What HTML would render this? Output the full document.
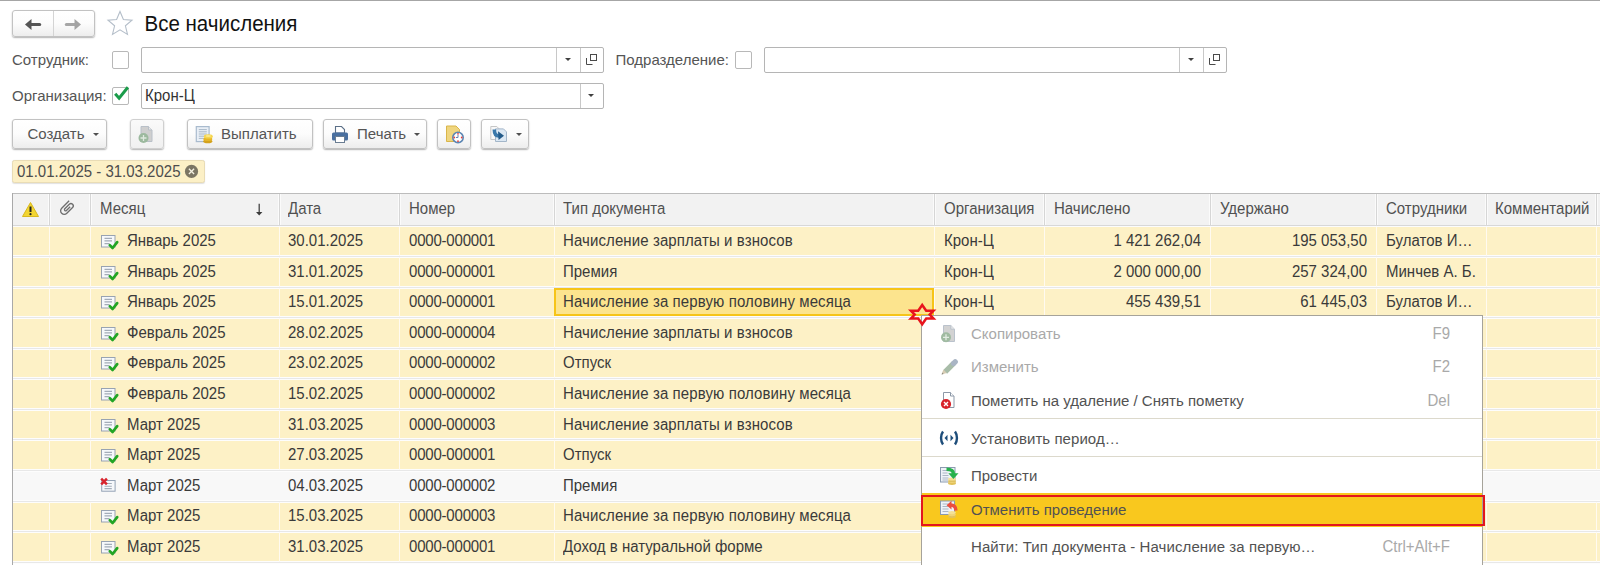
<!DOCTYPE html>
<html><head><meta charset="utf-8"><style>
*{box-sizing:border-box;margin:0;padding:0}
html,body{width:1600px;height:565px;overflow:hidden;background:#fff}
body{position:relative;font-family:"Liberation Sans",sans-serif;font-size:15px;color:#333}
.a{position:absolute}
.btn{position:absolute;border:1px solid #c2c2c2;border-radius:3px;background:linear-gradient(#fff 0%,#fcfcfc 50%,#ededed 100%);box-shadow:0 1px 1.5px rgba(0,0,0,0.3)}
.lbl{position:absolute;color:#555;height:20px;line-height:20px;white-space:nowrap}
.cb{position:absolute;width:17px;height:17.5px;border:1px solid #b8b8b8;border-radius:2px;background:#fff}
.inp{position:absolute;height:26px;border:1px solid #b5b5b5;border-radius:2px;background:#fff}
.dd{position:absolute;top:0;bottom:0;width:1px;background:#c8c8c8}
.tri{position:absolute;width:0;height:0;border-left:3.5px solid transparent;border-right:3.5px solid transparent;border-top:3.5px solid #404040}
.tri2{position:absolute;width:0;height:0;border-left:3px solid transparent;border-right:3px solid transparent;border-top:3px solid #505050}
.bt{position:absolute;color:#555;height:20px;line-height:20px;white-space:nowrap;transform:scaleY(1.03);transform-origin:0 15.2px}
.ht{position:absolute;top:192.5px;height:31px;line-height:31px;color:#505050;white-space:nowrap;transform:scaleY(1.05);transform-origin:0 20.7px}
.tx{position:absolute;height:20px;line-height:20px;white-space:nowrap;color:#3a3a3a;transform:scaleY(1.04);transform-origin:0 15.2px}
.mi{position:absolute;left:971px;height:20px;line-height:20px;white-space:nowrap;color:#525252;transform:scaleY(1.03);transform-origin:0 15.2px}
.mi.dis{color:#a9a9a9}
.sc{position:absolute;right:150px;height:20px;line-height:20px;color:#a9a9a9;white-space:nowrap;transform:scaleY(1.05);transform-origin:0 15.2px}
</style></head><body>
<div class="a" style="left:0;top:0;width:1600px;height:1px;background:#a6a6a6"></div>

<!-- nav -->
<div class="btn" style="left:12px;top:10px;width:83px;height:27px"></div>
<div class="a" style="left:53px;top:11px;width:1px;height:25px;background:#d4d4d4"></div>
<svg class="a" style="left:24px;top:17.5px" width="18" height="13" viewBox="0 0 18 13"><path d="M6 6.5h9.7" stroke="#555" stroke-width="3" stroke-linecap="round"/><path d="M1 6.5l6.5-5.5v11z" fill="#555"/></svg>
<svg class="a" style="left:64px;top:17.5px" width="18" height="13" viewBox="0 0 18 13"><path d="M2.3 6.5h10" stroke="#a6a6a6" stroke-width="3" stroke-linecap="round"/><path d="M17 6.5l-6.5-5.5v11z" fill="#a3a3a3"/></svg>
<svg class="a" style="left:106px;top:10px" width="28" height="26" viewBox="0 0 28 26"><path d="M14 1.5l3.4 8 8.6.7-6.6 5.6 2.1 8.6L14 19.8l-7.5 4.6 2.1-8.6L2 10.2l8.6-.7z" fill="none" stroke="#b4bec9" stroke-width="1.1"/></svg>
<div class="a" style="left:144.5px;top:9.5px;height:28px;line-height:28px;font-size:20.5px;color:#111;white-space:nowrap;transform:scaleY(1.07);transform-origin:0 21.1px">Все начисления</div>

<!-- form row 1 -->
<div class="lbl" style="left:12px;top:50px">Сотрудник:</div>
<div class="cb" style="left:112px;top:51px"></div>
<div class="inp" style="left:141px;top:47px;width:463px">
  <div class="dd" style="left:414px"></div><div class="tri" style="left:423px;top:9.5px"></div>
  <div class="dd" style="left:438px"></div>
  <svg class="a" style="left:443px;top:6px" width="14" height="12" viewBox="0 0 14 12"><rect x="5.5" y="0.5" width="6" height="6" fill="none" stroke="#4a4a4a"/><path d="M1.5 4v6.5h6" fill="none" stroke="#4a4a4a"/></svg>
</div>
<div class="lbl" style="left:615.5px;top:50px">Подразделение:</div>
<div class="cb" style="left:735px;top:51px"></div>
<div class="inp" style="left:764px;top:47px;width:463px">
  <div class="dd" style="left:414px"></div><div class="tri" style="left:423px;top:9.5px"></div>
  <div class="dd" style="left:438px"></div>
  <svg class="a" style="left:443px;top:6px" width="14" height="12" viewBox="0 0 14 12"><rect x="5.5" y="0.5" width="6" height="6" fill="none" stroke="#4a4a4a"/><path d="M1.5 4v6.5h6" fill="none" stroke="#4a4a4a"/></svg>
</div>

<!-- form row 2 -->
<div class="lbl" style="left:12px;top:86px">Организация:</div>
<div class="cb" style="left:112px;top:87px"></div>
<svg class="a" style="left:113px;top:85px" width="18" height="18" viewBox="0 0 18 18"><path d="M2.2 8.8l3.9 4.4L14.9 2.3" fill="none" stroke="#1a9c4a" stroke-width="3"/></svg>
<div class="inp" style="left:141px;top:83px;width:463px">
  <div class="a" style="left:3px;top:2px;height:20px;line-height:20px;color:#333;transform:scaleY(1.05);transform-origin:0 15.2px">Крон-Ц</div>
  <div class="dd" style="left:438px"></div><div class="tri" style="left:446px;top:9.5px"></div>
</div>

<!-- toolbar -->
<div class="btn" style="left:12px;top:119px;width:95px;height:30px"></div>
<div class="bt" style="left:27.5px;top:124px">Создать</div><div class="tri2" style="left:93px;top:133px"></div>
<div class="btn" style="left:130px;top:119px;width:34px;height:30px;background:linear-gradient(#fafafa,#f0f0f0);border-color:#d0d0d0"></div>
<svg class="a" style="left:137px;top:124px" width="20" height="20" viewBox="0 0 20 20"><path d="M4 2.5h7.5l3.5 3.5v11.5H4z" fill="#cfcfcf" stroke="#b9c0c8"/><path d="M11.5 2.5v3.5h3.5" fill="#e8e8e8" stroke="#b9c0c8"/><circle cx="6.5" cy="14" r="5" fill="#9cb99e"/><path d="M3.5 14h6M6.5 11v6" stroke="#dfe9df" stroke-width="1.3"/></svg>
<div class="btn" style="left:187px;top:119px;width:126px;height:30px"></div>
<svg class="a" style="left:194px;top:124px" width="22" height="22" viewBox="0 0 22 22"><rect x="2.3" y="2.6" width="12.8" height="15" fill="#e9eff6" stroke="#a9bbce" stroke-width="1.2"/><path d="M4.8 5.6h8M4.8 7.8h8M4.8 10h8M4.8 12.2h6M4.8 14.4h5" stroke="#98aabd" stroke-width="0.8"/><ellipse cx="13.8" cy="17.3" rx="4.5" ry="2" fill="#d4a21c"/><ellipse cx="13.8" cy="15" rx="4.5" ry="2" fill="#e6b627"/><ellipse cx="14.3" cy="12.4" rx="4.5" ry="2.1" fill="#f5d54e"/><ellipse cx="14.3" cy="12" rx="2.6" ry="1" fill="#fbe88a"/></svg>
<div class="bt" style="left:221px;top:124px">Выплатить</div>
<div class="btn" style="left:323px;top:119px;width:104px;height:30px"></div>
<svg class="a" style="left:330px;top:124px" width="20" height="20" viewBox="0 0 20 20"><path d="M5.5 2.5h6l3 3v3.5h-9z" fill="#fff" stroke="#5b6f87" stroke-width="1.1"/><rect x="2" y="8.5" width="16" height="8" rx="1.5" fill="#4a70a0"/><rect x="5.5" y="12.5" width="9" height="6" fill="#fff" stroke="#6a7d92"/></svg>
<div class="bt" style="left:357px;top:124px">Печать</div><div class="tri2" style="left:414px;top:133px"></div>
<div class="btn" style="left:437px;top:119px;width:34px;height:30px"></div>
<svg class="a" style="left:444px;top:124px" width="22" height="20" viewBox="0 0 22 20"><path d="M2.5 2h9.5l3.5 3.5V17.5h-13z" fill="#efd57e" stroke="#d9b54a" stroke-width="1"/><circle cx="14" cy="13.5" r="5.2" fill="#fff" stroke="#5c86b3" stroke-width="1.6"/><circle cx="14" cy="9.8" r="0.9" fill="#e04040"/><circle cx="14" cy="17.2" r="0.9" fill="#e04040"/><circle cx="10.3" cy="13.5" r="0.9" fill="#e04040"/><circle cx="17.7" cy="13.5" r="0.9" fill="#e04040"/><path d="M14 11v2.5h-2" stroke="#5c86b3" stroke-width="1" fill="none"/></svg>
<div class="btn" style="left:481px;top:119px;width:48px;height:30px"></div>
<svg class="a" style="left:488px;top:124px" width="22" height="20" viewBox="0 0 22 20"><path d="M2.8 2.5h6l2 2v11h-8z" fill="#f8f8f8" stroke="#c6c6c6"/><path d="M7.5 4.9h8l3 3v9.6h-11z" fill="#dce8f3" stroke="#a3b6c9"/><path d="M6.3 5.5C6.3 9.8 7.8 12 11 12" stroke="#3a78aa" stroke-width="3.6" fill="none"/><path d="M10 7.3l6 4.4-5.4 4.3z" fill="#245b8a"/></svg>
<div class="tri2" style="left:516px;top:133px"></div>

<!-- period tag -->
<div class="a" style="left:12px;top:160px;width:193px;height:23px;background:#fcf0c6;border:1px solid #e9dcb5;border-radius:2.5px;box-shadow:0 0.5px 1px rgba(0,0,0,0.12)"></div>
<div class="a" style="left:17px;top:162px;height:20px;line-height:20px;color:#4d4d4d;white-space:nowrap;transform:scaleY(1.05);transform-origin:0 15.2px">01.01.2025 - 31.03.2025</div>
<svg class="a" style="left:184px;top:164px" width="15" height="15" viewBox="0 0 15 15"><circle cx="7.5" cy="7.4" r="6.6" fill="#7b7563"/><path d="M4.9 4.8l5.2 5.2M10.1 4.8l-5.2 5.2" stroke="#f4f0e0" stroke-width="1.3"/></svg>

<!-- table -->
<div class="a" style="left:12px;top:193px;width:1588px;height:33px;background:#f2f2f2"></div>
<div class="a" style="left:12px;top:193px;width:1588px;height:1px;background:#bcbcbc"></div>
<div class="a" style="left:12px;top:225px;width:1588px;height:1px;background:#d8d8d8"></div>
<div class="a" style="left:48px;top:194px;width:3px;height:31px;background:#fbfbfb"></div><div class="a" style="left:49px;top:194px;width:1px;height:31px;background:#d6d6d6"></div><div class="a" style="left:89px;top:194px;width:3px;height:31px;background:#fbfbfb"></div><div class="a" style="left:90px;top:194px;width:1px;height:31px;background:#d6d6d6"></div><div class="a" style="left:278px;top:194px;width:3px;height:31px;background:#fbfbfb"></div><div class="a" style="left:279px;top:194px;width:1px;height:31px;background:#d6d6d6"></div><div class="a" style="left:398px;top:194px;width:3px;height:31px;background:#fbfbfb"></div><div class="a" style="left:399px;top:194px;width:1px;height:31px;background:#d6d6d6"></div><div class="a" style="left:553px;top:194px;width:3px;height:31px;background:#fbfbfb"></div><div class="a" style="left:554px;top:194px;width:1px;height:31px;background:#d6d6d6"></div><div class="a" style="left:933px;top:194px;width:3px;height:31px;background:#fbfbfb"></div><div class="a" style="left:934px;top:194px;width:1px;height:31px;background:#d6d6d6"></div><div class="a" style="left:1043px;top:194px;width:3px;height:31px;background:#fbfbfb"></div><div class="a" style="left:1044px;top:194px;width:1px;height:31px;background:#d6d6d6"></div><div class="a" style="left:1209px;top:194px;width:3px;height:31px;background:#fbfbfb"></div><div class="a" style="left:1210px;top:194px;width:1px;height:31px;background:#d6d6d6"></div><div class="a" style="left:1375px;top:194px;width:3px;height:31px;background:#fbfbfb"></div><div class="a" style="left:1376px;top:194px;width:1px;height:31px;background:#d6d6d6"></div><div class="a" style="left:1485px;top:194px;width:3px;height:31px;background:#fbfbfb"></div><div class="a" style="left:1486px;top:194px;width:1px;height:31px;background:#d6d6d6"></div><div class="a" style="left:1595px;top:194px;width:3px;height:31px;background:#fbfbfb"></div><div class="a" style="left:1596px;top:194px;width:1px;height:31px;background:#d6d6d6"></div><div class="ht" style="left:100px">Месяц</div><div class="ht" style="left:288px">Дата</div><div class="ht" style="left:409px">Номер</div><div class="ht" style="left:563px">Тип документа</div><div class="ht" style="left:944px">Организация</div><div class="ht" style="left:1054px">Начислено</div><div class="ht" style="left:1220px">Удержано</div><div class="ht" style="left:1386px">Сотрудники</div><div class="ht" style="left:1495px">Комментарий</div>
<svg class="a" style="left:21px;top:201px" width="19" height="17" viewBox="0 0 19 17"><path d="M9.5 1.5L17.5 15.5H1.5z" fill="#f2d531" stroke="#d8b81f" stroke-width="1" stroke-linejoin="round"/><path d="M9.5 5.5v5.5" stroke="#222" stroke-width="2"/><circle cx="9.5" cy="13.2" r="1.1" fill="#222"/></svg>
<svg class="a" style="left:58px;top:199px" width="18" height="18" viewBox="0 0 18 18"><g transform="translate(8.9 9.1) rotate(45) scale(1.1)"><path d="M-3.3 -6.2V3.4A3.3 3.3 0 0 0 3.3 3.4V-4A2.1 2.1 0 0 0 -0.9 -4V1.8A1.05 1.05 0 0 0 1.2 1.8V-3" fill="none" stroke="#6e6e6e" stroke-width="1.2"/></g></svg>
<svg class="a" style="left:254px;top:203px" width="10" height="14" viewBox="0 0 10 14"><path d="M5.2 0.8v9" stroke="#444" stroke-width="1.3"/><path d="M2 9.1h6.4L5.2 12.4z" fill="#3a3a3a"/></svg>
<div class="a" style="left:12px;top:226px;width:1588px;height:339px;overflow:hidden">
<div class="a" style="left:-12px;top:-226px;width:1600px;height:565px">
<div class="a" style="left:0;top:226px;width:1600px;height:31px;background:#fdf1c6"></div><div class="a" style="left:0;top:257px;width:1600px;height:31px;background:#fdf1c6"></div><div class="a" style="left:0;top:288px;width:1600px;height:30px;background:#fdf1c6"></div><div class="a" style="left:0;top:318px;width:1600px;height:31px;background:#fdf1c6"></div><div class="a" style="left:0;top:349px;width:1600px;height:30px;background:#fdf1c6"></div><div class="a" style="left:0;top:379px;width:1600px;height:31px;background:#fdf1c6"></div><div class="a" style="left:0;top:410px;width:1600px;height:30px;background:#fdf1c6"></div><div class="a" style="left:0;top:440px;width:1600px;height:31px;background:#fdf1c6"></div><div class="a" style="left:0;top:471px;width:1600px;height:31px;background:#f8f8f8"></div><div class="a" style="left:0;top:502px;width:1600px;height:30px;background:#fdf1c6"></div><div class="a" style="left:0;top:532px;width:1600px;height:31px;background:#fdf1c6"></div><div class="a" style="left:0;top:255px;width:1600px;height:3px;background:#fdfdfd"></div><div class="a" style="left:0;top:256px;width:1600px;height:1px;background:#e8e8e8"></div><div class="a" style="left:0;top:286px;width:1600px;height:3px;background:#fdfdfd"></div><div class="a" style="left:0;top:287px;width:1600px;height:1px;background:#e8e8e8"></div><div class="a" style="left:0;top:316px;width:1600px;height:3px;background:#fdfdfd"></div><div class="a" style="left:0;top:317px;width:1600px;height:1px;background:#e8e8e8"></div><div class="a" style="left:0;top:347px;width:1600px;height:3px;background:#fdfdfd"></div><div class="a" style="left:0;top:348px;width:1600px;height:1px;background:#e8e8e8"></div><div class="a" style="left:0;top:377px;width:1600px;height:3px;background:#fdfdfd"></div><div class="a" style="left:0;top:378px;width:1600px;height:1px;background:#e8e8e8"></div><div class="a" style="left:0;top:408px;width:1600px;height:3px;background:#fdfdfd"></div><div class="a" style="left:0;top:409px;width:1600px;height:1px;background:#e8e8e8"></div><div class="a" style="left:0;top:438px;width:1600px;height:3px;background:#fdfdfd"></div><div class="a" style="left:0;top:439px;width:1600px;height:1px;background:#e8e8e8"></div><div class="a" style="left:0;top:469px;width:1600px;height:3px;background:#fdfdfd"></div><div class="a" style="left:0;top:470px;width:1600px;height:1px;background:#e8e8e8"></div><div class="a" style="left:0;top:500px;width:1600px;height:3px;background:#fdfdfd"></div><div class="a" style="left:0;top:501px;width:1600px;height:1px;background:#e8e8e8"></div><div class="a" style="left:0;top:530px;width:1600px;height:3px;background:#fdfdfd"></div><div class="a" style="left:0;top:531px;width:1600px;height:1px;background:#e8e8e8"></div><div class="a" style="left:0;top:561px;width:1600px;height:3px;background:#fdfdfd"></div><div class="a" style="left:0;top:562px;width:1600px;height:1px;background:#e8e8e8"></div><div class="a" style="left:49px;top:226px;width:1px;height:30px;background:#fffaf0"></div><div class="a" style="left:90px;top:226px;width:1px;height:30px;background:#fffaf0"></div><div class="a" style="left:279px;top:226px;width:1px;height:30px;background:#fffaf0"></div><div class="a" style="left:399px;top:226px;width:1px;height:30px;background:#fffaf0"></div><div class="a" style="left:554px;top:226px;width:1px;height:30px;background:#fffaf0"></div><div class="a" style="left:934px;top:226px;width:1px;height:30px;background:#fffaf0"></div><div class="a" style="left:1044px;top:226px;width:1px;height:30px;background:#fffaf0"></div><div class="a" style="left:1210px;top:226px;width:1px;height:30px;background:#fffaf0"></div><div class="a" style="left:1376px;top:226px;width:1px;height:30px;background:#fffaf0"></div><div class="a" style="left:1486px;top:226px;width:1px;height:30px;background:#fffaf0"></div><div class="a" style="left:1596px;top:226px;width:1px;height:30px;background:#fffaf0"></div><svg class="a" style="left:100px;top:234px" width="20" height="16" viewBox="0 0 20 16"><rect x="1.5" y="1.5" width="13.5" height="11.5" fill="#f6f8fb" stroke="#98a3b2"/><path d="M4.5 4.3h7.5M4.5 6.9h7.5M4.5 9.6h5" stroke="#a3acb8" stroke-width="1.2"/><path d="M9.8 11.1L12.6 14L17.2 8.1" stroke="#22a524" stroke-width="2.7" fill="none" stroke-linecap="round" stroke-linejoin="round"/></svg><div class="tx" style="left:127px;top:231.0px;">Январь 2025</div><div class="tx" style="left:288px;top:231.0px;">30.01.2025</div><div class="tx" style="left:409px;top:231.0px;letter-spacing:-0.2px;">0000-000001</div><div class="tx" style="left:563px;top:231.0px;letter-spacing:0.1px;">Начисление зарплаты и взносов</div><div class="tx" style="left:944px;top:231.0px;">Крон-Ц</div><div class="tx" style="right:399px;top:231.0px;">1 421 262,04</div><div class="tx" style="right:233px;top:231.0px;">195 053,50</div><div class="tx" style="left:1386px;top:231.0px;">Булатов И…</div><div class="a" style="left:49px;top:257px;width:1px;height:30px;background:#fffaf0"></div><div class="a" style="left:90px;top:257px;width:1px;height:30px;background:#fffaf0"></div><div class="a" style="left:279px;top:257px;width:1px;height:30px;background:#fffaf0"></div><div class="a" style="left:399px;top:257px;width:1px;height:30px;background:#fffaf0"></div><div class="a" style="left:554px;top:257px;width:1px;height:30px;background:#fffaf0"></div><div class="a" style="left:934px;top:257px;width:1px;height:30px;background:#fffaf0"></div><div class="a" style="left:1044px;top:257px;width:1px;height:30px;background:#fffaf0"></div><div class="a" style="left:1210px;top:257px;width:1px;height:30px;background:#fffaf0"></div><div class="a" style="left:1376px;top:257px;width:1px;height:30px;background:#fffaf0"></div><div class="a" style="left:1486px;top:257px;width:1px;height:30px;background:#fffaf0"></div><div class="a" style="left:1596px;top:257px;width:1px;height:30px;background:#fffaf0"></div><svg class="a" style="left:100px;top:265px" width="20" height="16" viewBox="0 0 20 16"><rect x="1.5" y="1.5" width="13.5" height="11.5" fill="#f6f8fb" stroke="#98a3b2"/><path d="M4.5 4.3h7.5M4.5 6.9h7.5M4.5 9.6h5" stroke="#a3acb8" stroke-width="1.2"/><path d="M9.8 11.1L12.6 14L17.2 8.1" stroke="#22a524" stroke-width="2.7" fill="none" stroke-linecap="round" stroke-linejoin="round"/></svg><div class="tx" style="left:127px;top:261.6px;">Январь 2025</div><div class="tx" style="left:288px;top:261.6px;">31.01.2025</div><div class="tx" style="left:409px;top:261.6px;letter-spacing:-0.2px;">0000-000001</div><div class="tx" style="left:563px;top:261.6px;">Премия</div><div class="tx" style="left:944px;top:261.6px;">Крон-Ц</div><div class="tx" style="right:399px;top:261.6px;">2 000 000,00</div><div class="tx" style="right:233px;top:261.6px;">257 324,00</div><div class="tx" style="left:1386px;top:261.6px;">Минчев А. Б.</div><div class="a" style="left:49px;top:288px;width:1px;height:29px;background:#fffaf0"></div><div class="a" style="left:90px;top:288px;width:1px;height:29px;background:#fffaf0"></div><div class="a" style="left:279px;top:288px;width:1px;height:29px;background:#fffaf0"></div><div class="a" style="left:399px;top:288px;width:1px;height:29px;background:#fffaf0"></div><div class="a" style="left:554px;top:288px;width:1px;height:29px;background:#fffaf0"></div><div class="a" style="left:934px;top:288px;width:1px;height:29px;background:#fffaf0"></div><div class="a" style="left:1044px;top:288px;width:1px;height:29px;background:#fffaf0"></div><div class="a" style="left:1210px;top:288px;width:1px;height:29px;background:#fffaf0"></div><div class="a" style="left:1376px;top:288px;width:1px;height:29px;background:#fffaf0"></div><div class="a" style="left:1486px;top:288px;width:1px;height:29px;background:#fffaf0"></div><div class="a" style="left:1596px;top:288px;width:1px;height:29px;background:#fffaf0"></div><div class="a" style="left:554px;top:288px;width:380px;height:28px;background:#fce48e;border:2.6px solid #f6c419"></div><svg class="a" style="left:100px;top:295px" width="20" height="16" viewBox="0 0 20 16"><rect x="1.5" y="1.5" width="13.5" height="11.5" fill="#f6f8fb" stroke="#98a3b2"/><path d="M4.5 4.3h7.5M4.5 6.9h7.5M4.5 9.6h5" stroke="#a3acb8" stroke-width="1.2"/><path d="M9.8 11.1L12.6 14L17.2 8.1" stroke="#22a524" stroke-width="2.7" fill="none" stroke-linecap="round" stroke-linejoin="round"/></svg><div class="tx" style="left:127px;top:292.2px;">Январь 2025</div><div class="tx" style="left:288px;top:292.2px;">15.01.2025</div><div class="tx" style="left:409px;top:292.2px;letter-spacing:-0.2px;">0000-000001</div><div class="tx" style="left:563px;top:292.2px;letter-spacing:0.1px;">Начисление за первую половину месяца</div><div class="tx" style="left:944px;top:292.2px;">Крон-Ц</div><div class="tx" style="right:399px;top:292.2px;">455 439,51</div><div class="tx" style="right:233px;top:292.2px;">61 445,03</div><div class="tx" style="left:1386px;top:292.2px;">Булатов И…</div><div class="a" style="left:49px;top:318px;width:1px;height:30px;background:#fffaf0"></div><div class="a" style="left:90px;top:318px;width:1px;height:30px;background:#fffaf0"></div><div class="a" style="left:279px;top:318px;width:1px;height:30px;background:#fffaf0"></div><div class="a" style="left:399px;top:318px;width:1px;height:30px;background:#fffaf0"></div><div class="a" style="left:554px;top:318px;width:1px;height:30px;background:#fffaf0"></div><div class="a" style="left:934px;top:318px;width:1px;height:30px;background:#fffaf0"></div><div class="a" style="left:1044px;top:318px;width:1px;height:30px;background:#fffaf0"></div><div class="a" style="left:1210px;top:318px;width:1px;height:30px;background:#fffaf0"></div><div class="a" style="left:1376px;top:318px;width:1px;height:30px;background:#fffaf0"></div><div class="a" style="left:1486px;top:318px;width:1px;height:30px;background:#fffaf0"></div><div class="a" style="left:1596px;top:318px;width:1px;height:30px;background:#fffaf0"></div><svg class="a" style="left:100px;top:326px" width="20" height="16" viewBox="0 0 20 16"><rect x="1.5" y="1.5" width="13.5" height="11.5" fill="#f6f8fb" stroke="#98a3b2"/><path d="M4.5 4.3h7.5M4.5 6.9h7.5M4.5 9.6h5" stroke="#a3acb8" stroke-width="1.2"/><path d="M9.8 11.1L12.6 14L17.2 8.1" stroke="#22a524" stroke-width="2.7" fill="none" stroke-linecap="round" stroke-linejoin="round"/></svg><div class="tx" style="left:127px;top:322.8px;">Февраль 2025</div><div class="tx" style="left:288px;top:322.8px;">28.02.2025</div><div class="tx" style="left:409px;top:322.8px;letter-spacing:-0.2px;">0000-000004</div><div class="tx" style="left:563px;top:322.8px;letter-spacing:0.1px;">Начисление зарплаты и взносов</div><div class="a" style="left:49px;top:349px;width:1px;height:29px;background:#fffaf0"></div><div class="a" style="left:90px;top:349px;width:1px;height:29px;background:#fffaf0"></div><div class="a" style="left:279px;top:349px;width:1px;height:29px;background:#fffaf0"></div><div class="a" style="left:399px;top:349px;width:1px;height:29px;background:#fffaf0"></div><div class="a" style="left:554px;top:349px;width:1px;height:29px;background:#fffaf0"></div><div class="a" style="left:934px;top:349px;width:1px;height:29px;background:#fffaf0"></div><div class="a" style="left:1044px;top:349px;width:1px;height:29px;background:#fffaf0"></div><div class="a" style="left:1210px;top:349px;width:1px;height:29px;background:#fffaf0"></div><div class="a" style="left:1376px;top:349px;width:1px;height:29px;background:#fffaf0"></div><div class="a" style="left:1486px;top:349px;width:1px;height:29px;background:#fffaf0"></div><div class="a" style="left:1596px;top:349px;width:1px;height:29px;background:#fffaf0"></div><svg class="a" style="left:100px;top:356px" width="20" height="16" viewBox="0 0 20 16"><rect x="1.5" y="1.5" width="13.5" height="11.5" fill="#f6f8fb" stroke="#98a3b2"/><path d="M4.5 4.3h7.5M4.5 6.9h7.5M4.5 9.6h5" stroke="#a3acb8" stroke-width="1.2"/><path d="M9.8 11.1L12.6 14L17.2 8.1" stroke="#22a524" stroke-width="2.7" fill="none" stroke-linecap="round" stroke-linejoin="round"/></svg><div class="tx" style="left:127px;top:353.4px;">Февраль 2025</div><div class="tx" style="left:288px;top:353.4px;">23.02.2025</div><div class="tx" style="left:409px;top:353.4px;letter-spacing:-0.2px;">0000-000002</div><div class="tx" style="left:563px;top:353.4px;">Отпуск</div><div class="a" style="left:49px;top:379px;width:1px;height:30px;background:#fffaf0"></div><div class="a" style="left:90px;top:379px;width:1px;height:30px;background:#fffaf0"></div><div class="a" style="left:279px;top:379px;width:1px;height:30px;background:#fffaf0"></div><div class="a" style="left:399px;top:379px;width:1px;height:30px;background:#fffaf0"></div><div class="a" style="left:554px;top:379px;width:1px;height:30px;background:#fffaf0"></div><div class="a" style="left:934px;top:379px;width:1px;height:30px;background:#fffaf0"></div><div class="a" style="left:1044px;top:379px;width:1px;height:30px;background:#fffaf0"></div><div class="a" style="left:1210px;top:379px;width:1px;height:30px;background:#fffaf0"></div><div class="a" style="left:1376px;top:379px;width:1px;height:30px;background:#fffaf0"></div><div class="a" style="left:1486px;top:379px;width:1px;height:30px;background:#fffaf0"></div><div class="a" style="left:1596px;top:379px;width:1px;height:30px;background:#fffaf0"></div><svg class="a" style="left:100px;top:387px" width="20" height="16" viewBox="0 0 20 16"><rect x="1.5" y="1.5" width="13.5" height="11.5" fill="#f6f8fb" stroke="#98a3b2"/><path d="M4.5 4.3h7.5M4.5 6.9h7.5M4.5 9.6h5" stroke="#a3acb8" stroke-width="1.2"/><path d="M9.8 11.1L12.6 14L17.2 8.1" stroke="#22a524" stroke-width="2.7" fill="none" stroke-linecap="round" stroke-linejoin="round"/></svg><div class="tx" style="left:127px;top:384.0px;">Февраль 2025</div><div class="tx" style="left:288px;top:384.0px;">15.02.2025</div><div class="tx" style="left:409px;top:384.0px;letter-spacing:-0.2px;">0000-000002</div><div class="tx" style="left:563px;top:384.0px;letter-spacing:0.1px;">Начисление за первую половину месяца</div><div class="a" style="left:49px;top:410px;width:1px;height:29px;background:#fffaf0"></div><div class="a" style="left:90px;top:410px;width:1px;height:29px;background:#fffaf0"></div><div class="a" style="left:279px;top:410px;width:1px;height:29px;background:#fffaf0"></div><div class="a" style="left:399px;top:410px;width:1px;height:29px;background:#fffaf0"></div><div class="a" style="left:554px;top:410px;width:1px;height:29px;background:#fffaf0"></div><div class="a" style="left:934px;top:410px;width:1px;height:29px;background:#fffaf0"></div><div class="a" style="left:1044px;top:410px;width:1px;height:29px;background:#fffaf0"></div><div class="a" style="left:1210px;top:410px;width:1px;height:29px;background:#fffaf0"></div><div class="a" style="left:1376px;top:410px;width:1px;height:29px;background:#fffaf0"></div><div class="a" style="left:1486px;top:410px;width:1px;height:29px;background:#fffaf0"></div><div class="a" style="left:1596px;top:410px;width:1px;height:29px;background:#fffaf0"></div><svg class="a" style="left:100px;top:418px" width="20" height="16" viewBox="0 0 20 16"><rect x="1.5" y="1.5" width="13.5" height="11.5" fill="#f6f8fb" stroke="#98a3b2"/><path d="M4.5 4.3h7.5M4.5 6.9h7.5M4.5 9.6h5" stroke="#a3acb8" stroke-width="1.2"/><path d="M9.8 11.1L12.6 14L17.2 8.1" stroke="#22a524" stroke-width="2.7" fill="none" stroke-linecap="round" stroke-linejoin="round"/></svg><div class="tx" style="left:127px;top:414.6px;">Март 2025</div><div class="tx" style="left:288px;top:414.6px;">31.03.2025</div><div class="tx" style="left:409px;top:414.6px;letter-spacing:-0.2px;">0000-000003</div><div class="tx" style="left:563px;top:414.6px;letter-spacing:0.1px;">Начисление зарплаты и взносов</div><div class="a" style="left:49px;top:440px;width:1px;height:30px;background:#fffaf0"></div><div class="a" style="left:90px;top:440px;width:1px;height:30px;background:#fffaf0"></div><div class="a" style="left:279px;top:440px;width:1px;height:30px;background:#fffaf0"></div><div class="a" style="left:399px;top:440px;width:1px;height:30px;background:#fffaf0"></div><div class="a" style="left:554px;top:440px;width:1px;height:30px;background:#fffaf0"></div><div class="a" style="left:934px;top:440px;width:1px;height:30px;background:#fffaf0"></div><div class="a" style="left:1044px;top:440px;width:1px;height:30px;background:#fffaf0"></div><div class="a" style="left:1210px;top:440px;width:1px;height:30px;background:#fffaf0"></div><div class="a" style="left:1376px;top:440px;width:1px;height:30px;background:#fffaf0"></div><div class="a" style="left:1486px;top:440px;width:1px;height:30px;background:#fffaf0"></div><div class="a" style="left:1596px;top:440px;width:1px;height:30px;background:#fffaf0"></div><svg class="a" style="left:100px;top:448px" width="20" height="16" viewBox="0 0 20 16"><rect x="1.5" y="1.5" width="13.5" height="11.5" fill="#f6f8fb" stroke="#98a3b2"/><path d="M4.5 4.3h7.5M4.5 6.9h7.5M4.5 9.6h5" stroke="#a3acb8" stroke-width="1.2"/><path d="M9.8 11.1L12.6 14L17.2 8.1" stroke="#22a524" stroke-width="2.7" fill="none" stroke-linecap="round" stroke-linejoin="round"/></svg><div class="tx" style="left:127px;top:445.2px;">Март 2025</div><div class="tx" style="left:288px;top:445.2px;">27.03.2025</div><div class="tx" style="left:409px;top:445.2px;letter-spacing:-0.2px;">0000-000001</div><div class="tx" style="left:563px;top:445.2px;">Отпуск</div><svg class="a" style="left:98px;top:477px" width="20" height="18" viewBox="0 0 20 18"><rect x="3.7" y="3.5" width="13.4" height="10.7" fill="#f6f8fb" stroke="#93a2b5"/><path d="M6.5 6.5h7.3M6.5 9.2h7.3M6.5 11.6h7.3" stroke="#a3adb9" stroke-width="1.1"/><path d="M3.2 1.6l5.7 5.8M8.9 1.6L3.2 7.4" stroke="#d8232c" stroke-width="2.5"/></svg><div class="tx" style="left:127px;top:475.8px;">Март 2025</div><div class="tx" style="left:288px;top:475.8px;">04.03.2025</div><div class="tx" style="left:409px;top:475.8px;letter-spacing:-0.2px;">0000-000002</div><div class="tx" style="left:563px;top:475.8px;">Премия</div><div class="a" style="left:49px;top:502px;width:1px;height:29px;background:#fffaf0"></div><div class="a" style="left:90px;top:502px;width:1px;height:29px;background:#fffaf0"></div><div class="a" style="left:279px;top:502px;width:1px;height:29px;background:#fffaf0"></div><div class="a" style="left:399px;top:502px;width:1px;height:29px;background:#fffaf0"></div><div class="a" style="left:554px;top:502px;width:1px;height:29px;background:#fffaf0"></div><div class="a" style="left:934px;top:502px;width:1px;height:29px;background:#fffaf0"></div><div class="a" style="left:1044px;top:502px;width:1px;height:29px;background:#fffaf0"></div><div class="a" style="left:1210px;top:502px;width:1px;height:29px;background:#fffaf0"></div><div class="a" style="left:1376px;top:502px;width:1px;height:29px;background:#fffaf0"></div><div class="a" style="left:1486px;top:502px;width:1px;height:29px;background:#fffaf0"></div><div class="a" style="left:1596px;top:502px;width:1px;height:29px;background:#fffaf0"></div><svg class="a" style="left:100px;top:509px" width="20" height="16" viewBox="0 0 20 16"><rect x="1.5" y="1.5" width="13.5" height="11.5" fill="#f6f8fb" stroke="#98a3b2"/><path d="M4.5 4.3h7.5M4.5 6.9h7.5M4.5 9.6h5" stroke="#a3acb8" stroke-width="1.2"/><path d="M9.8 11.1L12.6 14L17.2 8.1" stroke="#22a524" stroke-width="2.7" fill="none" stroke-linecap="round" stroke-linejoin="round"/></svg><div class="tx" style="left:127px;top:506.4px;">Март 2025</div><div class="tx" style="left:288px;top:506.4px;">15.03.2025</div><div class="tx" style="left:409px;top:506.4px;letter-spacing:-0.2px;">0000-000003</div><div class="tx" style="left:563px;top:506.4px;letter-spacing:0.1px;">Начисление за первую половину месяца</div><div class="a" style="left:49px;top:532px;width:1px;height:30px;background:#fffaf0"></div><div class="a" style="left:90px;top:532px;width:1px;height:30px;background:#fffaf0"></div><div class="a" style="left:279px;top:532px;width:1px;height:30px;background:#fffaf0"></div><div class="a" style="left:399px;top:532px;width:1px;height:30px;background:#fffaf0"></div><div class="a" style="left:554px;top:532px;width:1px;height:30px;background:#fffaf0"></div><div class="a" style="left:934px;top:532px;width:1px;height:30px;background:#fffaf0"></div><div class="a" style="left:1044px;top:532px;width:1px;height:30px;background:#fffaf0"></div><div class="a" style="left:1210px;top:532px;width:1px;height:30px;background:#fffaf0"></div><div class="a" style="left:1376px;top:532px;width:1px;height:30px;background:#fffaf0"></div><div class="a" style="left:1486px;top:532px;width:1px;height:30px;background:#fffaf0"></div><div class="a" style="left:1596px;top:532px;width:1px;height:30px;background:#fffaf0"></div><svg class="a" style="left:100px;top:540px" width="20" height="16" viewBox="0 0 20 16"><rect x="1.5" y="1.5" width="13.5" height="11.5" fill="#f6f8fb" stroke="#98a3b2"/><path d="M4.5 4.3h7.5M4.5 6.9h7.5M4.5 9.6h5" stroke="#a3acb8" stroke-width="1.2"/><path d="M9.8 11.1L12.6 14L17.2 8.1" stroke="#22a524" stroke-width="2.7" fill="none" stroke-linecap="round" stroke-linejoin="round"/></svg><div class="tx" style="left:127px;top:537.0px;">Март 2025</div><div class="tx" style="left:288px;top:537.0px;">31.03.2025</div><div class="tx" style="left:409px;top:537.0px;letter-spacing:-0.2px;">0000-000001</div><div class="tx" style="left:563px;top:537.0px;">Доход в натуральной форме</div>
<div class="a" style="left:0;top:226px;width:1600px;height:1px;background:#fcfcfc"></div>
</div></div>
<div class="a" style="left:12px;top:193px;width:1px;height:372px;background:#a9a9a9"></div>

<!-- menu -->
<div class="a" style="left:921px;top:315px;width:562px;height:260px;background:#fff;border:1px solid #a6a39a"></div>
<div class="mi dis" style="top:323.5px">Скопировать</div><div class="sc" style="top:323.5px">F9</div>
<div class="mi dis" style="top:357px">Изменить</div><div class="sc" style="top:357px">F2</div>
<div class="mi" style="top:390.5px">Пометить на удаление / Снять пометку</div><div class="sc" style="top:390.5px">Del</div>
<div class="a" style="left:922px;top:418px;width:560px;height:1px;background:#dcd9cc"></div>
<div class="mi" style="top:428.5px;letter-spacing:0.05px">Установить период…</div>
<div class="a" style="left:922px;top:456px;width:560px;height:1px;background:#dcd9cc"></div>
<div class="mi" style="top:465.5px">Провести</div>
<div class="a" style="left:922px;top:493px;width:560px;height:34px;background:#f9c81e"></div>
<div class="mi" style="top:499.5px">Отменить проведение</div>
<div class="mi" style="top:536.5px;letter-spacing:0.08px">Найти: Тип документа - Начисление за первую…</div><div class="sc" style="top:536.5px">Ctrl+Alt+F</div>
<div class="a" style="left:921px;top:494.6px;width:564px;height:31.4px;border:2.4px solid #e3161e"></div>

<!-- menu icons -->
<svg class="a" style="left:938px;top:323px" width="20" height="20" viewBox="0 0 20 20"><path d="M5.5 2.5h7.3l3.7 3.7v12.3H5.5z" fill="#d2d2d2" stroke="#bac2cc"/><path d="M12.8 2.5v3.7h3.7" fill="#e8e8e8" stroke="#bac2cc"/><circle cx="8" cy="14.3" r="5" fill="#a0bba1"/><path d="M5 14.3h6M8 11.3v6" stroke="#e3ece3" stroke-width="1.3"/></svg>
<svg class="a" style="left:939px;top:357px" width="20" height="20" viewBox="0 0 20 20"><path d="M6.2 14.8L14.6 6.4" stroke="#a8bca8" stroke-width="5.4"/><path d="M14.6 6.4l1.6-1.6" stroke="#a9b5c4" stroke-width="5.4" stroke-linecap="round"/><path d="M2.6 17.6l1.7-5.1 3.4 3.4z" fill="#d6cbb2"/><path d="M2.6 17.6l.7-2 1.3 1.3z" fill="#8e8a80"/></svg>
<svg class="a" style="left:938px;top:390px" width="20" height="20" viewBox="0 0 20 20"><path d="M5.5 2.5h7l3.5 3.5v11.5H5.5z" fill="#fff" stroke="#8d99a8"/><path d="M12.5 2.5V6H16" fill="#fff" stroke="#8d99a8"/><circle cx="8" cy="14" r="5.1" fill="#d8222a"/><path d="M6 12l4 4M10 12l-4 4" stroke="#fff" stroke-width="1.4"/></svg>
<svg class="a" style="left:938px;top:428px" width="22" height="20" viewBox="0 0 22 20"><path d="M5 3.5c-2.6 3.6-2.6 9.4 0 13" stroke="#1d4d7a" stroke-width="2.4" fill="none"/><path d="M17 3.5c2.6 3.6 2.6 9.4 0 13" stroke="#1d4d7a" stroke-width="2.4" fill="none"/><path d="M6.5 10l3-3.3v6.6z" fill="#1d4d7a"/><path d="M15.5 10l-3-3.3v6.6z" fill="#1d4d7a"/></svg>
<svg class="a" style="left:938px;top:465px" width="22" height="22" viewBox="0 0 22 22"><rect x="2.5" y="2.5" width="14.5" height="14.5" fill="#eef2f7" stroke="#8b9bb0"/><path d="M4.5 5.5h5M4.5 8h5M4.5 10.5h6M4.5 13h6M4.5 15h6" stroke="#a3afbe" stroke-width="0.9"/><ellipse cx="14" cy="18.3" rx="4" ry="1.7" fill="#e2c25a"/><ellipse cx="14" cy="16.2" rx="4" ry="1.7" fill="#efd47a"/><ellipse cx="14" cy="14.1" rx="4" ry="1.7" fill="#f5e196"/><path d="M14 13.3h0M10.5 16.2h7" stroke="#caa640" stroke-width="0.6"/><path d="M8.5 4.2c5 0 7 1.5 7 5" stroke="#27b24c" stroke-width="3.6" fill="none"/><path d="M10.3 8.2h10.2l-5.1 5.8z" fill="#27b24c"/></svg>
<svg class="a" style="left:938px;top:498px" width="22" height="22" viewBox="0 0 22 22"><rect x="2.5" y="3" width="14" height="13.5" fill="#eef2f7" stroke="#8b9bb0"/><path d="M4.5 6h6M4.5 8.5h6M4.5 11h6M4.5 13.5h6" stroke="#a3afbe" stroke-width="0.9"/><ellipse cx="14" cy="18.6" rx="3.8" ry="1.6" fill="#e2c25a"/><ellipse cx="14" cy="16.6" rx="3.8" ry="1.6" fill="#efd47a"/><ellipse cx="14" cy="14.6" rx="3.8" ry="1.6" fill="#f5e196"/><path d="M17.8 12.5c0-3.5-1.7-5.5-5.3-5.5" stroke="#ec4d3e" stroke-width="3.4" fill="none"/><path d="M13.5 2.8L8.6 7.2l4.9 4.4z" fill="#ec4d3e"/></svg>

<svg class="a" style="left:902px;top:298px" width="40" height="34" viewBox="0 0 40 34"><path d="M20.20 6.95 L16.20 12.65 L8.90 12.65 L12.70 16.60 L8.90 20.55 L16.20 20.55 L20.20 26.25 L24.20 20.55 L31.50 20.55 L27.70 16.60 L31.50 12.65 L24.20 12.65Z" fill="none" stroke="#e8141c" stroke-width="2.5" stroke-linejoin="miter" stroke-miterlimit="10"/></svg>

</body></html>
